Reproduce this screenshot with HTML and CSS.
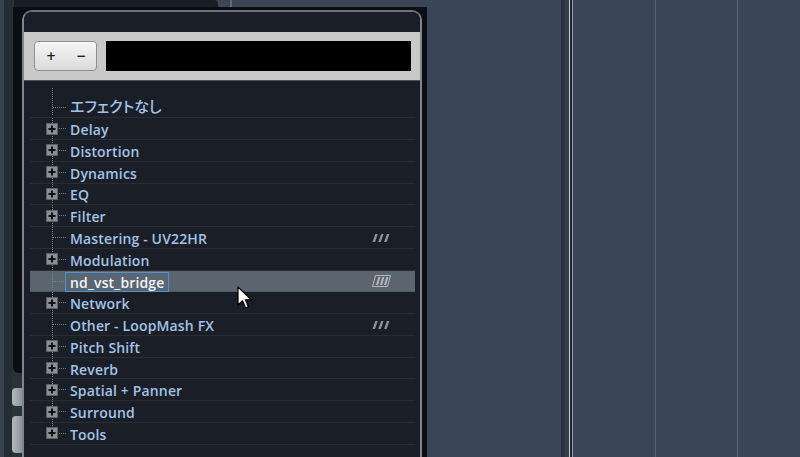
FILE: index.html
```html
<!DOCTYPE html>
<html lang="ja">
<head>
<meta charset="utf-8">
<title>Effects</title>
<link rel="stylesheet" href="styles.css">
</head>
<body>
<div class="screen">
  <div class="left">
    <div class="lcol lcol-a"></div>
    <div class="lcol lcol-b"></div>
    <div class="lcol lcol-c">
      <div class="tabcap"></div>
      <div class="blackpanel"></div>
      <div class="sidebtn sidebtn-1"></div>
      <div class="sidebtn sidebtn-2"></div>
    </div>
  </div>

  <div class="mid">
    <div class="topstrip">
      <div class="tab"></div>
      <div class="tabgap"></div>
      <div class="tabline"></div>
      <div class="tabrest"></div>
    </div>
    <div class="frame">
      <div class="popup">
        <div class="popup-head"></div>
        <div class="toolbar">
          <div class="btngroup"><span class="btn">+</span><span class="btn">−</span></div>
          <div class="field"></div>
        </div>
        <div class="list">
          <div class="row row-first leaf"><div class="tree"></div><span class="label label-ja">エフェクトなし</span></div>
          <div class="row"><div class="tree"><svg class="plus" width="12" height="12" viewBox="0 0 12 12"><rect x="0.5" y="0.5" width="11" height="11" fill="#8a8f95" stroke="#5c6167"/><rect x="2.5" y="5" width="7" height="2" fill="#111"/><rect x="5" y="2.5" width="2" height="7" fill="#111"/></svg></div><span class="label">Delay</span></div>
          <div class="row"><div class="tree"><svg class="plus" width="12" height="12" viewBox="0 0 12 12"><rect x="0.5" y="0.5" width="11" height="11" fill="#8a8f95" stroke="#5c6167"/><rect x="2.5" y="5" width="7" height="2" fill="#111"/><rect x="5" y="2.5" width="2" height="7" fill="#111"/></svg></div><span class="label">Distortion</span></div>
          <div class="row"><div class="tree"><svg class="plus" width="12" height="12" viewBox="0 0 12 12"><rect x="0.5" y="0.5" width="11" height="11" fill="#8a8f95" stroke="#5c6167"/><rect x="2.5" y="5" width="7" height="2" fill="#111"/><rect x="5" y="2.5" width="2" height="7" fill="#111"/></svg></div><span class="label">Dynamics</span></div>
          <div class="row"><div class="tree"><svg class="plus" width="12" height="12" viewBox="0 0 12 12"><rect x="0.5" y="0.5" width="11" height="11" fill="#8a8f95" stroke="#5c6167"/><rect x="2.5" y="5" width="7" height="2" fill="#111"/><rect x="5" y="2.5" width="2" height="7" fill="#111"/></svg></div><span class="label">EQ</span></div>
          <div class="row"><div class="tree"><svg class="plus" width="12" height="12" viewBox="0 0 12 12"><rect x="0.5" y="0.5" width="11" height="11" fill="#8a8f95" stroke="#5c6167"/><rect x="2.5" y="5" width="7" height="2" fill="#111"/><rect x="5" y="2.5" width="2" height="7" fill="#111"/></svg></div><span class="label">Filter</span></div>
          <div class="row leaf"><div class="tree"></div><span class="label">Mastering - UV22HR</span>
            <svg class="vst" width="18" height="10" viewBox="0 0 18 10"><polygon points="0.5,9 3,9 5.8,1 3.3,1" fill="#8d939a"/><polygon points="6.3,9 8.8,9 11.6,1 9.1,1" fill="#8d939a"/><polygon points="12.1,9 14.6,9 17.4,1 14.9,1" fill="#8d939a"/></svg></div>
          <div class="row"><div class="tree"><svg class="plus" width="12" height="12" viewBox="0 0 12 12"><rect x="0.5" y="0.5" width="11" height="11" fill="#8a8f95" stroke="#5c6167"/><rect x="2.5" y="5" width="7" height="2" fill="#111"/><rect x="5" y="2.5" width="2" height="7" fill="#111"/></svg></div><span class="label">Modulation</span></div>
          <div class="row leaf selected"><div class="tree"></div><span class="edit">nd_vst_bridge</span>
            <svg class="vst vst-box" width="19" height="12" viewBox="0 0 19 12"><polygon points="3.5,0.5 18.5,0.5 15.5,11.5 0.5,11.5" fill="none" stroke="#b4bac0"/><polygon points="4,10 6,10 8.4,2 6.4,2" fill="#b4bac0"/><polygon points="8,10 10,10 12.4,2 10.4,2" fill="#b4bac0"/><polygon points="12,10 14,10 16.4,2 14.4,2" fill="#b4bac0"/></svg></div>
          <div class="row"><div class="tree"><svg class="plus" width="12" height="12" viewBox="0 0 12 12"><rect x="0.5" y="0.5" width="11" height="11" fill="#8a8f95" stroke="#5c6167"/><rect x="2.5" y="5" width="7" height="2" fill="#111"/><rect x="5" y="2.5" width="2" height="7" fill="#111"/></svg></div><span class="label">Network</span></div>
          <div class="row leaf"><div class="tree"></div><span class="label">Other - LoopMash FX</span>
            <svg class="vst" width="18" height="10" viewBox="0 0 18 10"><polygon points="0.5,9 3,9 5.8,1 3.3,1" fill="#8d939a"/><polygon points="6.3,9 8.8,9 11.6,1 9.1,1" fill="#8d939a"/><polygon points="12.1,9 14.6,9 17.4,1 14.9,1" fill="#8d939a"/></svg></div>
          <div class="row"><div class="tree"><svg class="plus" width="12" height="12" viewBox="0 0 12 12"><rect x="0.5" y="0.5" width="11" height="11" fill="#8a8f95" stroke="#5c6167"/><rect x="2.5" y="5" width="7" height="2" fill="#111"/><rect x="5" y="2.5" width="2" height="7" fill="#111"/></svg></div><span class="label">Pitch Shift</span></div>
          <div class="row"><div class="tree"><svg class="plus" width="12" height="12" viewBox="0 0 12 12"><rect x="0.5" y="0.5" width="11" height="11" fill="#8a8f95" stroke="#5c6167"/><rect x="2.5" y="5" width="7" height="2" fill="#111"/><rect x="5" y="2.5" width="2" height="7" fill="#111"/></svg></div><span class="label">Reverb</span></div>
          <div class="row"><div class="tree"><svg class="plus" width="12" height="12" viewBox="0 0 12 12"><rect x="0.5" y="0.5" width="11" height="11" fill="#8a8f95" stroke="#5c6167"/><rect x="2.5" y="5" width="7" height="2" fill="#111"/><rect x="5" y="2.5" width="2" height="7" fill="#111"/></svg></div><span class="label">Spatial + Panner</span></div>
          <div class="row"><div class="tree"><svg class="plus" width="12" height="12" viewBox="0 0 12 12"><rect x="0.5" y="0.5" width="11" height="11" fill="#8a8f95" stroke="#5c6167"/><rect x="2.5" y="5" width="7" height="2" fill="#111"/><rect x="5" y="2.5" width="2" height="7" fill="#111"/></svg></div><span class="label">Surround</span></div>
          <div class="row row-last"><div class="tree"><svg class="plus" width="12" height="12" viewBox="0 0 12 12"><rect x="0.5" y="0.5" width="11" height="11" fill="#8a8f95" stroke="#5c6167"/><rect x="2.5" y="5" width="7" height="2" fill="#111"/><rect x="5" y="2.5" width="2" height="7" fill="#111"/></svg></div><span class="label">Tools</span></div>
        </div>
      </div>
    </div>
    <svg class="cursor" width="16" height="26" viewBox="0 0 16 26"><path d="M1 1 L1 19 L5.5 14.8 L8.6 22 L11.4 20.8 L8.4 13.8 L14.4 13.8 Z" fill="#fff" stroke="#000" stroke-width="1.2" stroke-linejoin="round"/></svg>
  </div>

  <div class="right">
    <div class="sp sp-1"></div>
    <div class="divider">
      <div class="d-dark"></div>
      <div class="d-gap"></div>
      <div class="d-light"></div>
      <div class="d-black"></div>
      <div class="d-light2"></div>
    </div>
    <div class="sp sp-2"></div>
    <div class="gridline"></div>
    <div class="sp sp-3"></div>
    <div class="gridline"></div>
    <div class="sp sp-4"></div>
  </div>
</div>
</body>
</html>
```

FILE: styles.css
```css
* { box-sizing: border-box; }

html, body {
  margin: 0;
  padding: 0;
  width: 800px;
  height: 457px;
  overflow: hidden;
  background: #3a4655;
  font-family: "Open Sans", "Noto Sans CJK JP", sans-serif;
}

.screen {
  display: flex;
  width: 800px;
  height: 457px;
}

/* ---------- left strip ---------- */
.left {
  display: flex;
  width: 22px;
  height: 100%;
}
.lcol { height: 100%; }
.lcol-a { width: 4px; background: #394350; }
.lcol-b { width: 8px; background: #242c36; }
.lcol-c {
  width: 10px;
  background: #29313b;
  display: flex;
  flex-direction: column;
}
.tabcap {
  height: 7px;
  margin-left: 2px;
  background: #181d24;
}
.blackpanel {
  height: 366px;
  margin-left: 1px;
  background: #0b0f13;
  border-bottom-left-radius: 6px;
}
.sidebtn {
  background: linear-gradient(to right, #b3b9bf, #8c939a);
  border-radius: 4px 0 0 4px;
}
.sidebtn-1 { height: 18px; margin-top: 15px; }
.sidebtn-2 { height: 37px; margin-top: 10px; }

/* ---------- middle ---------- */
.mid {
  position: relative;
  width: 405px;
  height: 100%;
  display: flex;
  flex-direction: column;
}
.topstrip {
  height: 7px;
  display: flex;
}
.tab {
  width: 196px;
  background: #181d24;
  border-top-right-radius: 4px;
}
.tabgap { width: 12px; background: #3c4653; }
.tabline { width: 2px; background: #5f6a77; }
.tabrest { flex: 1; background: #3a4655; }

.frame {
  flex: 1;
  display: flex;
  flex-direction: column;
  background: #0b0f13;
  padding: 3px 5px 0 0;
  min-height: 0;
}
.popup {
  flex: 1;
  display: flex;
  flex-direction: column;
  background: #1a1e26;
  border: 2px solid #80858b;
  border-bottom: none;
  border-top-color: #6c7178;
  border-radius: 10px 10px 0 0;
  overflow: hidden;
}
.popup-head { height: 20px; background: #1a1e26; }

.toolbar {
  height: 49px;
  display: flex;
  align-items: center;
  gap: 9px;
  padding: 9px 9px 9px 10px;
  background: #c9c9c9;
  border-bottom: 1px solid #4d5258;
}
.btngroup {
  width: 63px;
  height: 30px;
  display: flex;
  justify-content: space-between;
  align-items: center;
  padding: 0 10px 0 11px;
  border: 1px solid #8b9096;
  border-radius: 4px;
  background: linear-gradient(to bottom, #f6f6f6, #dadada);
  box-shadow: inset 0 1px 0 #ffffff;
}
.btn {
  width: 10px;
  text-align: center;
  font-family: "DejaVu Sans", sans-serif;
  font-size: 12px;
  font-weight: bold;
  color: #1e1e1e;
  line-height: 1;
}
.field {
  flex: 1;
  height: 30px;
  background: #000;
}

.list {
  padding: 0 5px 0 6px;
}
.row {
  display: flex;
  align-items: center;
  height: 21.78px;
  border-bottom: 1px solid #272c35;
}
.row-first {
  height: 37.3px;
  align-items: flex-end;
  padding-bottom: 1px;
}
.tree {
  width: 36px;
  align-self: stretch;
  display: flex;
  align-items: center;
  padding-left: 16px;
  background:
    repeating-linear-gradient(to bottom, #7a8088 0 1px, transparent 1px 2px) 22px 0 / 1px 100% no-repeat,
    repeating-linear-gradient(to right, #7a8088 0 1px, transparent 1px 2px) 23px 50% / 13px 1px no-repeat;
}
.row-first .tree {
  background:
    repeating-linear-gradient(to bottom, #7a8088 0 1px, transparent 1px 2px) 22px 7px / 1px calc(100% - 7px) no-repeat,
    repeating-linear-gradient(to right, #7a8088 0 1px, transparent 1px 2px) 23px 26px / 13px 1px no-repeat;
}
.row-last .tree {
  background:
    repeating-linear-gradient(to bottom, #7a8088 0 1px, transparent 1px 2px) 22px 0 / 1px 50% no-repeat,
    repeating-linear-gradient(to right, #7a8088 0 1px, transparent 1px 2px) 23px 50% / 13px 1px no-repeat;
}
.plus { display: block; }

.label {
  padding-left: 4px;
  margin-top: 3px;
  font-size: 14px;
  font-weight: 600;
  letter-spacing: 0.15px;
  color: #a2c4e7;
  line-height: 20px;
  white-space: nowrap;
}
.label-ja {
  font-size: 15px;
  font-weight: 500;
  letter-spacing: 0;
  font-feature-settings: "palt" 1;
  color: #a3c4e6;
  margin-top: 0;
  height: 21px;
  line-height: 23px;
}
.row.selected {
  background: #5a6570;
  border-bottom-color: #505a64;
}
.edit {
  margin-left: -1px;
  margin-top: 1px;
  height: 20px;
  padding: 0 3px 0 4px;
  border: 1px solid #4d91d6;
  font-size: 14px;
  line-height: 19px;
  letter-spacing: 0.15px;
  color: #f1f5f9;
  font-weight: 600;
  white-space: nowrap;
}
.vst {
  display: block;
  margin-left: auto;
  margin-right: 25px;
}
.vst-box { margin-right: 24px; }

.cursor {
  position: absolute;
  left: 215px;
  top: 286px;
}

/* ---------- right area ---------- */
.right {
  flex: 1;
  height: 100%;
  display: flex;
}
.sp-1 { width: 134px; }
.divider { display: flex; height: 100%; }
.d-dark { width: 4px; background: #2b3440; }
.d-gap { width: 4px; background: #34404d; }
.d-light { width: 1px; background: #c4cad0; }
.d-black { width: 2px; background: #1d242c; }
.d-light2 { width: 1px; background: #9aa2aa; }
.sp-2 { width: 82px; }
.sp-3 { width: 81px; }
.sp-4 { flex: 1; }
.gridline { width: 1px; height: 100%; background: #55677c; }
```
